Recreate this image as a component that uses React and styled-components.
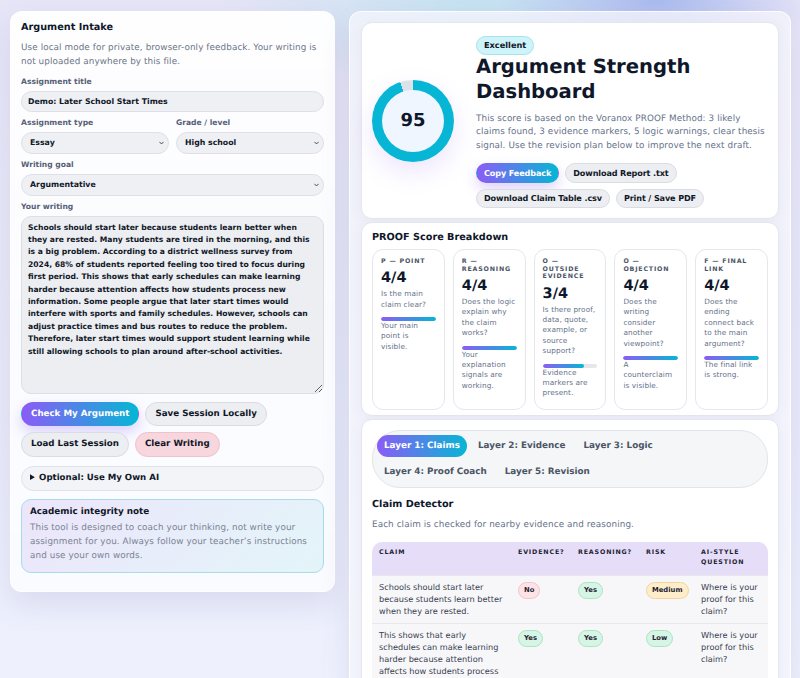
import React, { useState } from 'react';
import styled, { createGlobalStyle } from 'styled-components';

const essay = `Schools should start later because students learn better when they are rested. Many students are tired in the morning, and this is a big problem. According to a district wellness survey from 2024, 68% of students reported feeling too tired to focus during first period. This shows that early schedules can make learning harder because attention affects how students process new information. Some people argue that later start times would interfere with sports and family schedules. However, schools can adjust practice times and bus routes to reduce the problem. Therefore, later start times would support student learning while still allowing schools to plan around after-school activities.`;

const proof = [
  { label: 'P — Point', score: 4, question: 'Is the main claim clear?', note: 'Your main point is visible.' },
  { label: 'R — Reasoning', score: 4, question: 'Does the logic explain why the claim works?', note: 'Your explanation signals are working.' },
  { label: 'O — Outside Evidence', score: 3, question: 'Is there proof, data, quote, example, or source support?', note: 'Evidence markers are present.' },
  { label: 'O — Objection', score: 4, question: 'Does the writing consider another viewpoint?', note: 'A counterclaim is visible.' },
  { label: 'F — Final Link', score: 4, question: 'Does the ending connect back to the main argument?', note: 'The final link is strong.' },
];

const claims = [
  { text: 'Schools should start later because students learn better when they are rested.', evidence: 'No', reasoning: 'Yes', risk: 'Medium' },
  { text: 'This shows that early schedules can make learning harder because attention affects how students process new information.', evidence: 'Yes', reasoning: 'Yes', risk: 'Low' },
  { text: 'Therefore, later start times would support student learning while still allowing schools to plan around after-school activities.', evidence: 'No', reasoning: 'Yes', risk: 'Medium' },
];

const layers = ['Layer 1: Claims', 'Layer 2: Evidence', 'Layer 3: Logic', 'Layer 4: Proof Coach', 'Layer 5: Revision'];

const pillTone = {
  Yes: { bg: '#d6f5e4', border: '#a9e5c3' },
  Low: { bg: '#d6f5e4', border: '#a9e5c3' },
  No: { bg: '#fde3e6', border: '#f6c3ca' },
  Medium: { bg: '#fdedcb', border: '#f5d39b' },
};

// small caret drawn over the right end of each select
const Caret = () => (
  <CaretIcon viewBox="0 0 8 5" aria-hidden="true">
    <path d="M1 1l3 3 3-3" fill="none" stroke="#1f2937" strokeWidth="1.3" strokeLinecap="round" strokeLinejoin="round" />
  </CaretIcon>
);

const Dropdown = ({ options, value }) => (
  <SelectWrap>
    <Select defaultValue={value}>
      {options.map((o) => (
        <option key={o}>{o}</option>
      ))}
    </Select>
    <Caret />
  </SelectWrap>
);

const App = () => {
  const [activeLayer, setActiveLayer] = useState(0);
  const [writing, setWriting] = useState(essay);

  return (
    <>
      <GlobalStyle />
      <Page>
        <Intake>
          <PanelTitle>Argument Intake</PanelTitle>
          <Muted>Use local mode for private, browser-only feedback. Your writing is not uploaded anywhere by this file.</Muted>

          <Field first>
            <Label>Assignment title</Label>
            <TextInput defaultValue="Demo: Later School Start Times" />
          </Field>

          <TwoCols>
            <Field>
              <Label>Assignment type</Label>
              <Dropdown value="Essay" options={['Essay', 'Paragraph', 'Speech']} />
            </Field>
            <Field>
              <Label>Grade / level</Label>
              <Dropdown value="High school" options={['Middle school', 'High school', 'College']} />
            </Field>
          </TwoCols>

          <Field>
            <Label>Writing goal</Label>
            <Dropdown value="Argumentative" options={['Argumentative', 'Persuasive']} />
          </Field>

          <Field>
            <Label>Your writing</Label>
            <Writing value={writing} onChange={(e) => setWriting(e.target.value)} />
          </Field>

          <ButtonRow>
            <Button variant="primary">Check My Argument</Button>
            <Button>Save Session Locally</Button>
            <Button>Load Last Session</Button>
            <Button variant="danger" onClick={() => setWriting('')}>Clear Writing</Button>
          </ButtonRow>

          <Optional>
            <summary>Optional: Use My Own AI</summary>
          </Optional>

          <Note>
            <NoteTitle>Academic integrity note</NoteTitle>
            <NoteText>This tool is designed to coach your thinking, not write your assignment for you. Always follow your teacher’s instructions and use your own words.</NoteText>
          </Note>
        </Intake>

        <Board>
          <HeroCard>
            <Ring score={95}>
              <RingCenter>95</RingCenter>
            </Ring>
            <HeroBody>
              <Badge>Excellent</Badge>
              <HeroTitle>Argument Strength Dashboard</HeroTitle>
              <HeroText>This score is based on the Voranox PROOF Method: 3 likely claims found, 3 evidence markers, 5 logic warnings, clear thesis signal. Use the revision plan below to improve the next draft.</HeroText>
              <ButtonRow small>
                <Button small variant="primary">Copy Feedback</Button>
                <Button small>Download Report .txt</Button>
                <Button small>Download Claim Table .csv</Button>
                <Button small>Print / Save PDF</Button>
              </ButtonRow>
            </HeroBody>
          </HeroCard>

          <BreakdownCard>
            <SectionTitle>PROOF Score Breakdown</SectionTitle>
            <ProofGrid>
              {proof.map((item, i) => (
                <ProofItem key={i}>
                  <ProofLabel>{item.label}</ProofLabel>
                  <ProofScore>{item.score}/4</ProofScore>
                  <ProofQuestion>{item.question}</ProofQuestion>
                  <Meter>
                    <MeterFill style={{ width: `${(item.score / 4) * 100}%` }} />
                  </Meter>
                  <ProofQuestion>{item.note}</ProofQuestion>
                </ProofItem>
              ))}
            </ProofGrid>
          </BreakdownCard>

          <LayersCard>
            <Tabs>
              {layers.map((layer, i) => (
                <Tab key={layer} active={i === activeLayer} onClick={() => setActiveLayer(i)}>
                  {layer}
                </Tab>
              ))}
            </Tabs>
            <SectionTitle spaced>Claim Detector</SectionTitle>
            <SubText>Each claim is checked for nearby evidence and reasoning.</SubText>
            <ClaimTable>
              <colgroup>
                <col style={{ width: 139 }} />
                <col style={{ width: 60 }} />
                <col style={{ width: 68 }} />
                <col style={{ width: 55 }} />
                <col />
              </colgroup>
              <thead>
                <tr>
                  <Th>Claim</Th>
                  <Th>Evidence?</Th>
                  <Th>Reasoning?</Th>
                  <Th>Risk</Th>
                  <Th>AI-style question</Th>
                </tr>
              </thead>
              <tbody>
                {claims.map((row, i) => (
                  <tr key={i}>
                    <Td>{row.text}</Td>
                    <Td><Pill tone={row.evidence}>{row.evidence}</Pill></Td>
                    <Td><Pill tone={row.reasoning}>{row.reasoning}</Pill></Td>
                    <Td><Pill tone={row.risk}>{row.risk}</Pill></Td>
                    <Td>Where is your proof for this claim?</Td>
                  </tr>
                ))}
              </tbody>
            </ClaimTable>
          </LayersCard>
        </Board>
      </Page>
    </>
  );
};

export default App;

const GlobalStyle = createGlobalStyle`
  * { box-sizing: border-box; }
  body {
    margin: 0;
    font-family: "DejaVu Sans", Verdana, sans-serif;
    text-rendering: geometricPrecision;
    color: #111827;
    background:
      radial-gradient(ellipse 160px 70px at 82% 0%, rgba(168, 184, 238, 0.95), transparent),
      radial-gradient(ellipse 260px 90px at 60% 0%, rgba(192, 226, 240, 0.9), transparent),
      linear-gradient(180deg, #e7e5f7 0%, #e9ebfa 60%, #eef1fd 100%);
  }
  input, select, textarea, button { text-rendering: geometricPrecision; }
`;

const Page = styled.div`
  display: grid;
  grid-template-columns: 325px 442px;
  gap: 14px;
  align-items: start;
  padding: 11px 9px 0 10px;
  height: 678px;
  overflow: hidden;
`;

const Intake = styled.section`
  background: linear-gradient(180deg, rgba(255, 255, 255, 0.94), rgba(250, 251, 255, 0.96));
  border: 1px solid rgba(255, 255, 255, 0.95);
  border-radius: 12px;
  box-shadow: 0 12px 30px rgba(84, 84, 150, 0.13);
  padding: 9px 10px 18px;
`;

const PanelTitle = styled.h2`
  margin: 0;
  font-size: 9.7px;
  line-height: 13px;
  font-weight: 700;
  color: #0f172a;
`;

/* body copy: 8.8px with a hair of tracking */
const Muted = styled.p`
  margin: 8px 0 0;
  font-size: 8.8px;
  letter-spacing: 0.1px;
  line-height: 13.5px;
  color: #6b7588;
`;

const Field = styled.div`
  margin-top: ${({ first }) => (first ? '8px' : '6.5px')};
`;

const Label = styled.label`
  display: block;
  margin-bottom: 4.5px;
  font-size: 7.6px;
  line-height: 9px;
  font-weight: 700;
  color: #566076;
`;

const TwoCols = styled.div`
  display: grid;
  grid-template-columns: 1fr 1fr;
  gap: 7px;
`;

const TextInput = styled.input`
  display: block;
  width: 100%;
  height: 21px;
  padding: 0 6px;
  border: 1px solid #dde0e7;
  border-radius: 999px;
  background: #eef0f4;
  font-family: inherit;
  font-size: 7.8px;
  font-weight: 700;
  color: #111827;
  outline: none;
`;

const SelectWrap = styled.div`
  position: relative;
`;

const Select = styled.select`
  display: block;
  width: 100%;
  height: 22px;
  padding: 0 16px 0 8px;
  border: 1px solid #dde0e7;
  border-radius: 999px;
  background: #eef0f4;
  appearance: none;
  font-family: inherit;
  font-size: 7.8px;
  font-weight: 700;
  color: #111827;
  outline: none;
`;

const CaretIcon = styled.svg`
  position: absolute;
  right: 5px;
  top: 9px;
  width: 5px;
  height: 4px;
  pointer-events: none;
`;

const Writing = styled.textarea`
  display: block;
  width: 100%;
  height: 178px;
  padding: 5px 6px;
  border: 1px solid #dcdfe6;
  border-radius: 10px;
  background: #eceef2;
  font-family: inherit;
  font-size: 7.62px;
  line-height: 12.4px;
  font-weight: 700;
  color: #111827;
  resize: vertical;
  outline: none;
`;

const ButtonRow = styled.div`
  display: flex;
  flex-wrap: wrap;
  gap: 6px;
  margin-top: ${({ small }) => (small ? '10px' : '8px')};
`;

const Button = styled.button`
  height: ${({ small }) => (small ? '19.5px' : '24.6px')};
  padding: ${({ small }) => (small ? '0 7px' : '0 9px')};
  border-radius: 999px;
  border: 1px solid ${({ variant }) => (variant === 'danger' ? '#f1c2cc' : '#d9dce3')};
  background: ${({ variant }) =>
    variant === 'primary'
      ? 'linear-gradient(90deg, #8b5cf6, #06b6d4)'
      : variant === 'danger'
      ? '#f7d6dd'
      : '#eceef2'};
  color: ${({ variant }) => (variant === 'primary' ? '#ffffff' : '#111827')};
  box-shadow: ${({ variant }) => (variant === 'primary' ? '0 6px 14px rgba(139, 92, 246, 0.28)' : 'none')};
  font-family: inherit;
  font-size: ${({ small }) => (small ? '8.1px' : '8.7px')};
  letter-spacing: ${({ small }) => (small ? '-0.12px' : '0')};
  font-weight: 700;
  white-space: nowrap;
  cursor: pointer;
  ${({ variant }) => variant === 'primary' && 'border-color: transparent;'}
`;

const Optional = styled.details`
  margin-top: 9px;
  height: 25px;
  border: 1px solid #e0e2e9;
  border-radius: 999px;
  background: #f3f4f7;

  summary {
    padding: 0 8px;
    font-size: 8.6px;
    line-height: 23px;
    font-weight: 700;
    color: #111827;
    cursor: pointer;
  }
`;

const Note = styled.div`
  margin-top: 8px;
  padding: 7px 8px 9px;
  border: 1px solid #a9dbea;
  border-radius: 10px;
  background: linear-gradient(135deg, #ece5fb 0%, #e7eefa 55%, #e3f5f9 100%);
`;

const NoteTitle = styled.div`
  font-size: 8.8px;
  line-height: 11px;
  font-weight: 700;
  color: #111827;
`;

const NoteText = styled.p`
  margin: 3px 0 0;
  font-size: 8.8px;
  letter-spacing: 0.1px;
  line-height: 14px;
  color: #7a8294;
`;

const Board = styled.main`
  display: flex;
  flex-direction: column;
  gap: 3px;
  padding: 10px 11px;
  border: 1px solid rgba(255, 255, 255, 0.85);
  border-radius: 12px;
  background: rgba(246, 247, 252, 0.72);
  box-shadow: 0 12px 30px rgba(84, 84, 150, 0.12);
`;

const Card = styled.section`
  background: #ffffff;
  border: 1px solid #e5e7ee;
  border-radius: 11px;
  box-shadow: 0 4px 14px rgba(80, 90, 140, 0.07);
`;

const HeroCard = styled(Card)`
  display: flex;
  align-items: center;
  gap: 22px;
  padding: 10px;
`;

const Ring = styled.div`
  flex: none;
  display: grid;
  place-items: center;
  width: 82px;
  height: 82px;
  border-radius: 50%;
  background: conic-gradient(#06b6d4 0 ${({ score }) => score}%, #dde2e9 ${({ score }) => score}% 100%);
  box-shadow: 0 10px 26px rgba(139, 92, 246, 0.16);
`;

const RingCenter = styled.div`
  display: grid;
  place-items: center;
  width: 62px;
  height: 62px;
  border-radius: 50%;
  background: #eff6ff;
  font-size: 18px;
  font-weight: 700;
  color: #0f172a;
`;

const HeroBody = styled.div`
  flex: 1;
`;

const Badge = styled.span`
  display: inline-block;
  height: 19px;
  padding: 0 7px;
  border: 1px solid #a5e4ee;
  border-radius: 999px;
  background: #cef3f8;
  font-size: 8.2px;
  line-height: 17px;
  font-weight: 700;
  color: #111827;
`;

const HeroTitle = styled.h1`
  margin: 0;
  font-size: 19.6px;
  line-height: 24.5px;
  font-weight: 700;
  color: #0f172a;
`;

const HeroText = styled.p`
  margin: 8.5px 0 0;
  font-size: 8.8px;
  letter-spacing: 0.1px;
  line-height: 13.5px;
  color: #66728a;
`;

const BreakdownCard = styled(Card)`
  padding: 8px 10px 5px;
`;

const SectionTitle = styled.h2`
  margin: ${({ spaced }) => (spaced ? '10px 0 0' : '0')};
  font-size: 9.7px;
  line-height: 13px;
  font-weight: 700;
  color: #0f172a;
`;

const ProofGrid = styled.div`
  display: grid;
  grid-template-columns: repeat(5, 1fr);
  gap: 8px;
  margin-top: 5px;
`;

const ProofItem = styled.div`
  padding: 8px 8px 10px;
  border: 1px solid #e5e7eb;
  border-radius: 11px;
  background: #ffffff;
`;

const ProofLabel = styled.div`
  font-size: 6.3px;
  line-height: 7.7px;
  font-weight: 700;
  letter-spacing: 0.8px;
  text-transform: uppercase;
  color: #4a5568;
`;

const ProofScore = styled.div`
  margin-top: 4.5px;
  font-size: 14.5px;
  line-height: 17px;
  font-weight: 700;
  color: #0f172a;
`;

const ProofQuestion = styled.p`
  margin: 2px 0 0;
  font-size: 7.3px;
  letter-spacing: 0.1px;
  line-height: 10.4px;
  color: #66728a;
`;

const Meter = styled.div`
  height: 4px;
  margin-top: 7px;
  border-radius: 999px;
  background: #e5e7eb;
  overflow: hidden;

  & + p {
    margin-top: 0;
  }
`;

const MeterFill = styled.div`
  height: 100%;
  border-radius: 999px;
  background: linear-gradient(90deg, #8b5cf6, #06b6d4);
`;

const LayersCard = styled(Card)`
  padding: 10px;
`;

const Tabs = styled.div`
  display: flex;
  flex-wrap: wrap;
  gap: 4px;
  padding: 4px;
  border: 1px solid #e2e4ea;
  border-radius: 28px;
  background: #f5f6f8;
`;

const Tab = styled.button`
  height: 22px;
  padding: 0 7px;
  border: none;
  border-radius: 999px;
  background: ${({ active }) => (active ? 'linear-gradient(90deg, #8b5cf6, #06b6d4)' : 'transparent')};
  color: ${({ active }) => (active ? '#ffffff' : '#4b5565')};
  font-family: inherit;
  font-size: 8.8px;
  font-weight: 700;
  white-space: nowrap;
  cursor: pointer;
`;

const SubText = styled.p`
  margin: 8.5px 0 0;
  font-size: 8.8px;
  letter-spacing: 0.1px;
  line-height: 12px;
  color: #66728a;
`;

const ClaimTable = styled.table`
  width: 100%;
  margin-top: 11px;
  border-collapse: separate;
  border-spacing: 0;
  table-layout: fixed;
  border-radius: 10px 10px 0 0;
  overflow: hidden;
`;

const Th = styled.th`
  padding: 6px 7px 7px;
  background: #e6ddf9;
  font-size: 6.3px;
  line-height: 10px;
  font-weight: 700;
  letter-spacing: 0.85px;
  text-transform: uppercase;
  text-align: left;
  vertical-align: top;
  color: #1f2433;
`;

const Td = styled.td`
  padding: 6px 7px;
  border-top: 1px solid #e7e8ec;
  background: #f7f7f9;
  font-size: 8.2px;
  line-height: 11.7px;
  vertical-align: top;
  color: #374151;
`;

const Pill = styled.span`
  display: inline-block;
  height: 17px;
  padding: 0 5px;
  border: 1px solid ${({ tone }) => pillTone[tone].border};
  border-radius: 999px;
  background: ${({ tone }) => pillTone[tone].bg};
  font-size: 6.8px;
  line-height: 15px;
  font-weight: 700;
  color: #1f2433;
`;
